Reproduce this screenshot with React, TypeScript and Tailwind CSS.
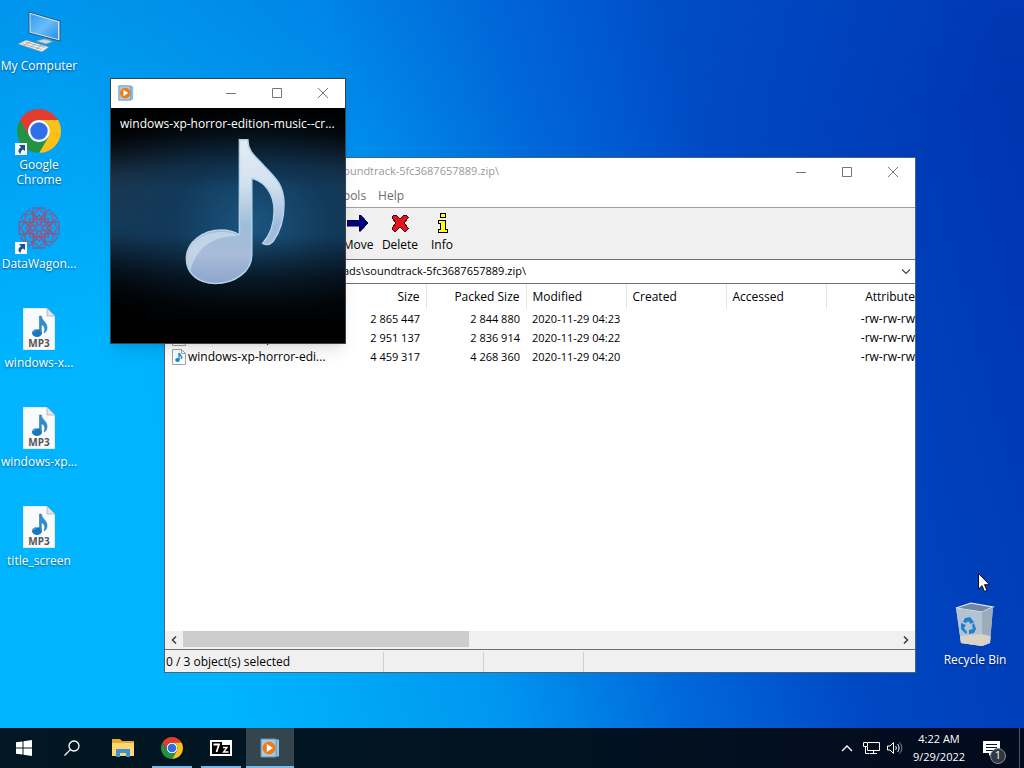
import type { ReactNode } from "react";

const files = [
  { name: "soundtrack-menu.mp3", size: "2 865 447", packed: "2 844 880", modified: "2020-11-29 04:23", attributes: "-rw-rw-rw" },
  { name: "title_screen.mp3", size: "2 951 137", packed: "2 836 914", modified: "2020-11-29 04:22", attributes: "-rw-rw-rw" },
  { name: "windows-xp-horror-edi...", size: "4 459 317", packed: "4 268 360", modified: "2020-11-29 04:20", attributes: "-rw-rw-rw" },
];

const archivePath = "C:\\Users\\admin\\Downloads\\soundtrack-5fc3687657889.zip\\";

function ChromeIcon({ className }: { className: string }) {
  return (
    <svg viewBox="0 0 48 48" className={className}>
      <circle cx="24" cy="24" r="12" fill="#fff" />
      <path fill="#e33b2e" d="M24 12H44.78a24 24 0 0 0-41.56 0L13.6 30A12 12 0 0 1 24 12Z" />
      <path fill="#fbc116" d="M34.39 30 24 48A24 24 0 0 0 44.78 12H24A12 12 0 0 1 34.39 30Z" />
      <path fill="#229342" d="M13.6 30 3.22 12A24 24 0 0 0 24 48L34.39 30A12 12 0 0 1 13.6 30Z" />
      <circle cx="24" cy="24" r="9.5" fill="#2f6fe8" />
    </svg>
  );
}

function ComputerIcon() {
  return (
    <svg viewBox="0 0 48 48" className="size-12">
      <defs>
        <linearGradient id="screen" x1="0" y1="0" x2="1" y2="1">
          <stop offset="0" stopColor="#2f9cf0" />
          <stop offset="0.5" stopColor="#6abcf8" />
          <stop offset="1" stopColor="#2492e6" />
        </linearGradient>
      </defs>
      <path d="M29 30l6 2v3l-5-1z" fill="#9aa6b0" />
      <path d="M21 33l8-2 9 2.500-7 2.500z" fill="#cfd6dc" stroke="#7d8992" strokeWidth=".5" />
      <path d="M14 4l31 9v20l-31-8z" fill="#d9e3ea" stroke="#25577e" strokeWidth="1" />
      <path d="M15.500 6l27.500 8v17l-27.500-7z" fill="url(#screen)" />
      <path d="M3 36l8-4 23 7-7 5z" fill="#eef1f3" stroke="#7d8992" strokeWidth=".7" />
      <path d="M7 35.500l20 6M10 34l20 5.500M9 37.500l6-3.500M15 39.500l6-4M21 41l6-4" stroke="#98a4ad" strokeWidth=".8" />
    </svg>
  );
}

// Eight knots turned around one centre
function DataWagonIcon() {
  return (
    <svg viewBox="0 0 48 48" className="size-12" fill="none" stroke="#6a66a4" strokeWidth="1.3">
      {[0, 45, 90, 135, 180, 225, 270, 315].map((angle) => (
        <g key={angle} transform={`rotate(${angle} 24 22)`}>
          <path d="M18 2h12v6l-6 6-6-6z" />
          <path d="M18 8l6-5 6 5M19 14l5-5 5 5-5 5z" stroke="#a5527f" />
          <path d="M24 14l7-7M24 14l-7-7" stroke="#8d5587" />
        </g>
      ))}
    </svg>
  );
}

function ShortcutArrow() {
  return (
    <svg viewBox="0 0 12 12" className="absolute bottom-0 left-0 size-3">
      <path d="M0 0h12v12H0z" fill="#f4f8fb" />
      <path d="M4 2h6v6L8 6.500C6.200 7.500 5.500 9 5.600 11 2.500 9 3 6 6 4.200z" fill="#1d4f91" />
    </svg>
  );
}

function Mp3Icon() {
  return (
    <svg viewBox="0 0 32 42" className="h-[42px] w-8">
      <path d="M0 0h24l8 8v34H0z" fill="#f8fafb" stroke="#a4b4bf" strokeWidth=".5" />
      <path d="M24 0v8h8z" fill="#dfe6ea" stroke="#8fa0ab" strokeWidth=".6" />
      <ellipse cx="14" cy="25" rx="5" ry="4" fill="#1978bd" />
      <path d="M16.500 25V8h1.800c.5 5 6 6 5.700 12-.1 2.500-1.400 4.500-3 5 2-5-.2-7.500-2.700-8.500v9z" fill="#2e8fd0" stroke="#17649f" strokeWidth=".5" />
      <path d="M10.500 24c1-2.500 3.500-3 5-2.500" stroke="#78c4ee" fill="none" />
      <text x="16" y="39" textAnchor="middle" fontSize="10" fontWeight="700" fontFamily="Open Sans, sans-serif" fill="#555">MP3</text>
    </svg>
  );
}

function SmallMusicIcon() {
  return (
    <svg viewBox="0 0 14 16" className="h-4 w-3.5 shrink-0">
      <path d="M.5.500h9l4 4v11H.5z" fill="#fff" stroke="#9aa5ad" />
      <path d="M9.500.500v4h4" fill="none" stroke="#9aa5ad" />
      <ellipse cx="5.500" cy="11" rx="2.300" ry="1.900" fill="#1c86cf" />
      <path d="M7 11V4c.5 2 3.500 2.500 2.500 6" fill="none" stroke="#1c86cf" strokeWidth="1.300" />
    </svg>
  );
}

function RecycleBinIcon() {
  return (
    <svg viewBox="0 0 48 48" className="size-12">
      <path d="M5 6l15-5 22 4-3 36-8 3-21-3z" fill="#b9c7d6" />
      <path d="M5 6l15-5 22 4-11 5z" fill="#6f87a6" stroke="#e8eff5" strokeWidth="1.200" />
      <path d="M5 6l26 4v34l-21-3z" fill="#b4c3d4" />
      <path d="M31 10l11-5-3 36-8 3z" fill="#9dacbd" />
      <path d="M9 34l21-2 9.500 2-.5 7-8 3-21-3z" fill="#d8d3c4" />
      <g fill="#1a80cf">
        <path d="M14 16l5-1 4 5-3 2-3-3-2 2-3-1z" />
        <path d="M10 21l5 2-2 3 3 4-1 2-5-5z" />
        <path d="M23 21l2 6-2 4-5 1v-4l4-1-1-4z" />
      </g>
    </svg>
  );
}

function PlayerIcon({ className }: { className: string }) {
  return (
    <svg viewBox="0 0 20 20" className={className}>
      <path d="M5 1.500h14v17H5z" fill="#8fbfe0" />
      <path d="M1 1h15v18H1z" fill="#a9cbe2" stroke="#5e93b8" />
      <circle cx="9" cy="10" r="6.500" fill="#ee7c1b" />
      <path d="M6.800 6v8l6-4z" fill="#fff" />
    </svg>
  );
}

function DesktopIcon({ label, shortcut, children }: { label: string; shortcut?: boolean; children: ReactNode }) {
  return (
    <button type="button" className="flex h-[99px] w-[78px] flex-col items-center text-white">
      <span className="relative flex size-12 items-center justify-center">
        {children}
        {shortcut && <ShortcutArrow />}
      </span>
      <span className="mt-0.5 leading-[15px] [text-shadow:0_1px_2px_rgba(0,0,0,0.5)]">{label}</span>
    </button>
  );
}

function WindowControls() {
  return (
    <div className="-mr-px flex h-full text-[#777]">
      <button type="button" aria-label="Minimize" className="flex w-[46px] items-center justify-center">
        <svg viewBox="0 0 10 10" className="size-2.5" stroke="currentColor"><path d="M0 5.500h10" /></svg>
      </button>
      <button type="button" aria-label="Maximize" className="flex w-[46px] items-center justify-center">
        <svg viewBox="0 0 10 10" className="size-2.5" stroke="currentColor" fill="none"><path d="M.5.500h9v9h-9z" /></svg>
      </button>
      <button type="button" aria-label="Close" className="flex w-[46px] items-center justify-center">
        <svg viewBox="0 0 10 10" className="size-2.5" stroke="currentColor"><path d="M0 0l10 10M10 0L0 10" /></svg>
      </button>
    </div>
  );
}

function ToolbarButton({ label, children }: { label: string; children: ReactNode }) {
  return (
    <button type="button" className="flex w-[42px] flex-col items-center">
      <svg viewBox="0 0 24 24" className="size-6" shapeRendering="crispEdges">{children}</svg>
      <span className="mt-0.5 leading-4">{label}</span>
    </button>
  );
}

function ArchiveWindow() {
  return (
    <section className="absolute top-[157px] right-[108px] bottom-[55px] left-[164px] flex flex-col border border-[#46627c] bg-white text-black">
      {/* Title bar */}
      <header className="flex h-[27px] items-center justify-between">
        <div className="flex items-center gap-1.5 pl-1.5 text-[11px] text-[#999]">
          <span className="flex h-4 w-4 items-center justify-center bg-black text-[10px] text-white">7z</span>
          <h2>{archivePath}</h2>
        </div>
        <WindowControls />
      </header>

      {/* Menu */}
      <nav className="flex h-[22px] items-center gap-3 pl-1.5 text-[#6d6d6d]">
        {["File", "Edit", "View", "Favorites", "Tools", "Help"].map((item) => (
          <button key={item} type="button">{item}</button>
        ))}
      </nav>

      {/* Toolbar */}
      <div className="flex h-[52px] items-start border-t border-[#a0a0a0] bg-[#f0f0f0] pt-[3px] pl-1">
        <ToolbarButton label="Add"><path d="M10 4h4v6h6v4h-6v6h-4v-6H4v-4h6z" fill="#0a0" /></ToolbarButton>
        <ToolbarButton label="Extract"><path d="M2 10h20v4H2z" fill="#00f" /></ToolbarButton>
        <ToolbarButton label="Test"><path d="M3 8l9 8 9-8v4l-9 8-9-8z" fill="#0a0" /></ToolbarButton>
        <ToolbarButton label="Copy"><path d="M2 9h12V4l8 8-8 8v-5H2z" fill="#0a0" /></ToolbarButton>
        <ToolbarButton label="Move"><path d="M1 9h12V4h2l7 8-7 8h-2v-5H1z" fill="#00007c" stroke="#000" strokeWidth=".5" /></ToolbarButton>
        <ToolbarButton label="Delete">
          <path d="M4 6l2-2h2l4 4 4-4h2l2 2v1l-4 5 4 5v1l-2 2h-2l-4-4-4 4H6l-2-2v-1l4-5-4-5z" fill="#e3141c" stroke="#4a0000" />
        </ToolbarButton>
        <ToolbarButton label="Info">
          <path d="M10 2.500h5v4h-5zM8 9.500h7v9h2v3H8v-3h2v-6H8z" fill="#ffff1c" stroke="#000" />
        </ToolbarButton>
      </div>

      {/* Address */}
      <div className="relative flex h-[25px] items-center border-t border-b border-[#6f6f6f] bg-white">
        <select aria-label="Address" className="h-full w-full appearance-none bg-white pl-[55px] text-[11px] outline-none">
          <option>{archivePath}</option>
        </select>
        <svg viewBox="0 0 10 6" className="pointer-events-none absolute right-1 h-1.5 w-2.5" fill="none" stroke="#444" strokeWidth="1.200">
          <path d="M1 .5l4 4 4-4" />
        </svg>
      </div>

      {/* File list */}
      <div className="min-h-0 flex-1 pl-px">
        <table className="w-full table-fixed text-left">
          <thead>
            <tr className="h-[25px] [&>th]:border-r [&>th]:border-[#e5e5e5] [&>th]:px-1.5 [&>th]:font-normal">
              <th className="w-[160px]">Name</th>
              <th className="w-[100px] text-right">Size</th>
              <th className="w-[100px] text-right">Packed Size</th>
              <th className="w-[100px]">Modified</th>
              <th className="w-[100px]">Created</th>
              <th className="w-[100px]">Accessed</th>
              <th className="border-r-0! pr-0! text-right">Attribute</th>
            </tr>
          </thead>
          <tbody>
            {files.map((file) => (
              <tr key={file.name} className="h-[19px] whitespace-nowrap [&>td]:px-1.5 [&>td]:leading-[19px]">
                <td>
                  <span className="flex items-center gap-0.5"><SmallMusicIcon />{file.name}</span>
                </td>
                <td className="text-right text-[11px]">{file.size}</td>
                <td className="text-right text-[11px]">{file.packed}</td>
                <td className="text-[11px]">{file.modified}</td>
                <td />
                <td />
                <td className="pr-0! text-right">{file.attributes}</td>
              </tr>
            ))}
          </tbody>
        </table>
      </div>

      {/* Horizontal scroll bar */}
      <div className="flex h-[18px] shrink-0 bg-[#f0f0f0]">
        <button type="button" aria-label="Scroll left" className="flex w-[18px] items-center justify-center">
          <svg viewBox="0 0 6 8" className="h-2 w-1.5" fill="none" stroke="#444" strokeWidth="1.600"><path d="M5 .5L1.500 4 5 7.500" /></svg>
        </button>
        <div className="flex-1"><div className="h-4 w-2/5 bg-[#cdcdcd]" /></div>
        <button type="button" aria-label="Scroll right" className="flex w-[18px] items-center justify-center">
          <svg viewBox="0 0 6 8" className="h-2 w-1.5" fill="none" stroke="#444" strokeWidth="1.600"><path d="M1 .5L4.500 4 1 7.500" /></svg>
        </button>
      </div>

      {/* Status bar */}
      <footer className="flex h-[23px] shrink-0 items-stretch border-t border-[#6f6f6f] bg-[#f0f0f0] pt-0.5 [&>span]:border-r [&>span]:border-[#d0d0d0]">
        <span className="w-[219px] pl-px leading-5">0 / 3 object(s) selected</span>
        <span className="w-[100px]" />
        <span className="w-[100px]" />
      </footer>
    </section>
  );
}

function PlayerWindow() {
  return (
    <section className="absolute top-[78px] left-[110px] flex h-[266px] w-[236px] flex-col border border-[#3c4248] bg-black shadow-lg">
      <header className="flex h-[29px] items-center justify-between bg-white pb-0.5">
        <PlayerIcon className="ml-[7px] size-4" />
        <WindowControls />
      </header>
      <div className="relative flex-1 bg-[radial-gradient(ellipse_at_60%_50%,#1b5580_0%,#12395a_40%,transparent_85%),linear-gradient(to_bottom,#000_0%,#04080d_10%,#1d3449_28%,#153a58_50%,#0a1a2e_70%,#010204_84%,#000_100%)]">
        <div className="absolute inset-0 bg-[linear-gradient(to_bottom,#000_0%,#000a_10%,#0003_24%,transparent_34%,transparent_54%,#0009_72%,#000_92%)]" />
        <svg viewBox="0 0 236 235" className="absolute inset-0 h-full w-full">
          <defs>
            <linearGradient id="note" x1="0" y1="0" x2="0" y2="1">
              <stop offset="0" stopColor="#e4ecf2" />
              <stop offset=".3" stopColor="#d3e2ef" />
              <stop offset=".6" stopColor="#9dbcd9" />
              <stop offset=".8" stopColor="#a9bcd9" />
              <stop offset="1" stopColor="#8ba5cb" />
            </linearGradient>
          </defs>
          <path
            d="M129.500 31h8.500c0 12 8 17 16 26 12 12 20.500 20 20.500 39 0 16-5 29-11 37.500-3 3-7 4-10.500 2 8-9 11.500-21 11.500-33 0-17-9-29-22.500-32.500v77c0 17-17 29-37 29-17 0-29-10-29-25 0-17 17-29 35-29 8 0 13 1.500 18.500 5z"
            fill="url(#note)"
            stroke="#b4d2ea"
            strokeWidth="1.500"
          />
          <path d="M77 152c-1-16 15-28 34-28 8 0 12 1 17 4-26 0-42 12-48 35-2-3-3-7-3-11z" fill="#e1eaf3" opacity=".5" />
        </svg>
        <p className="relative px-[9px] pt-2 leading-4 whitespace-nowrap text-white">windows-xp-horror-edition-music--cr...</p>
      </div>
    </section>
  );
}

function Taskbar() {
  return (
    <footer className="flex h-10 shrink-0 items-stretch bg-[linear-gradient(to_right,#021722,#021422_45%,#020a1e)] text-white">
      <button type="button" aria-label="Start" className="flex w-12 items-center justify-center">
        <svg viewBox="0 0 16 16" className="size-4" fill="#fff"><path d="M0 2.300l6.500-.9v6.100H0zM7.500 1.200L16 0v7.500H7.500zM0 8.500h6.500v6.100L0 13.700zM7.500 8.500H16V16l-8.500-1.200z" /></svg>
      </button>
      <button type="button" aria-label="Search" className="flex w-12 items-center justify-center">
        <svg viewBox="0 0 16 16" className="size-4" fill="none" stroke="#fff" strokeWidth="1.300"><circle cx="10" cy="6" r="5" /><path d="M6.400 9.600L.5 15.500" /></svg>
      </button>
      <button type="button" aria-label="File Explorer" className="ml-[3px] flex w-12 items-center justify-center">
        <svg viewBox="0 0 22 20" className="h-5 w-[22px]">
          <path d="M0 1h8l2 2h12v14H0z" fill="#e3ab28" />
          <path d="M0 5h22v13H0z" fill="#fcd873" />
          <path d="M4 11h14v8h-4v-4H8v4H4z" fill="#3f92cf" />
        </svg>
      </button>
      <button type="button" aria-label="Google Chrome" className="ml-px flex w-12 flex-col items-center">
        <span className="flex h-[38px] items-center"><ChromeIcon className="mt-0.5 size-[22px]" /></span>
        <span className="h-0.5 w-10 bg-[#76b9ed]" />
      </button>
      <button type="button" aria-label="7-Zip" className="ml-px flex w-12 flex-col items-center">
        <span className="flex h-[38px] items-center">
          <svg viewBox="0 0 22 16" className="mt-0.5 h-4 w-[22px]">
            <path d="M0 0h22v16H0z" fill="#fff" />
            <path d="M2 2h10v12H2zM12 5h8v9h-8z" fill="#000" />
            <path d="M3.500 4.500H9L6.500 12" fill="none" stroke="#fff" strokeWidth="1.800" />
            <path d="M13 7.500h4l-3.500 4.500h5" fill="none" stroke="#fff" strokeWidth="1.300" />
          </svg>
        </span>
        <span className="h-0.5 w-10 bg-[#76b9ed]" />
      </button>
      <button type="button" aria-label="Media Player" className="ml-px flex w-12 flex-col items-center bg-[#34454e]">
        <span className="flex h-[38px] items-center"><PlayerIcon className="mt-0.5 size-5" /></span>
        <span className="h-0.5 w-full bg-[#76b9ed]" />
      </button>

      {/* Tray */}
      <div className="ml-auto flex items-center">
        <button type="button" aria-label="Show hidden icons" className="flex w-6 justify-center">
          <svg viewBox="0 0 12 8" className="h-2 w-3" fill="none" stroke="#fff" strokeWidth="1.400"><path d="M1 7l5-5 5 5" /></svg>
        </button>
        <button type="button" aria-label="Network" className="flex w-6 justify-center">
          <svg viewBox="0 0 17 16" className="h-4 w-[17px]" fill="none" stroke="#fff"><path d="M5 2.500h11.500v8H4.500V7M.5 2.500h4v4h-4zM2.500 6.500v7h4M10.500 10.500v3M7 13.500h7" /></svg>
        </button>
        <button type="button" aria-label="Volume" className="flex w-6 justify-center">
          <svg viewBox="0 0 16 14" className="h-3.5 w-4" fill="none" stroke="#fff"><path d="M.5 5h2.500l3.500-3.500v11L3 9H.5zM8.500 5c1 1 1 3 0 4M10.500 3c2 2 2 6 0 8" /><path d="M12.500 1.500c3 3 3 8 0 11" opacity=".5" /></svg>
        </button>
        <time dateTime="2022-09-29T04:22" className="w-16 text-center text-[11px] leading-[18px]">4:22 AM<br />9/29/2022</time>
        <button type="button" aria-label="Notifications" className="ml-1 flex h-10 w-11 items-center pl-2">
          <span className="relative">
            <svg viewBox="0 0 17 17" className="size-[17px]"><path d="M0 1h17v12H9l-3 3v-3H0z" fill="#fff" /><path d="M3 4.500h11M3 7.500h11M3 10.500h7" stroke="#07142a" /></svg>
            <span className="absolute top-2 left-[7px] flex size-4 items-center justify-center rounded-full border border-[#8a9199] bg-[#31383f] text-[11px]">1</span>
          </span>
        </button>
        <button type="button" aria-label="Show desktop" className="h-10 w-[5px] border-l border-[#4c5768]" />
      </div>
    </footer>
  );
}

export default function App() {
  return (
    <div className="flex h-screen flex-col overflow-hidden bg-[linear-gradient(165deg,#0060d060_0%,transparent_35%),linear-gradient(75deg,#00b4ff_0%,#00b4ff_20%,#00acf9_27%,#0096f0_42%,#0068da_57%,#0056ce_65%,#0049c4_71%,#0040bc_82%,#0035b0_97%)] font-['Open_Sans','Noto_Sans',sans-serif] text-xs">
      <main className="relative flex min-h-0 flex-1 justify-between">
        <div className="flex flex-col pt-2">
          <DesktopIcon label="My Computer"><ComputerIcon /></DesktopIcon>
          <DesktopIcon label="Google Chrome" shortcut><ChromeIcon className="size-11" /></DesktopIcon>
          <DesktopIcon label="DataWagon..." shortcut><DataWagonIcon /></DesktopIcon>
          <DesktopIcon label="windows-x..."><Mp3Icon /></DesktopIcon>
          <DesktopIcon label="windows-xp..."><Mp3Icon /></DesktopIcon>
          <DesktopIcon label="title_screen"><Mp3Icon /></DesktopIcon>
        </div>

        <div className="flex flex-col justify-end pr-2.5 pb-[27px]">
          <DesktopIcon label="Recycle Bin"><RecycleBinIcon /></DesktopIcon>
        </div>

        <ArchiveWindow />
        <PlayerWindow />

        {/* Mouse pointer */}
        <svg viewBox="0 0 12 19" className="absolute top-[573px] left-[978px] h-[19px] w-3">
          <path d="M.5.500v15.500l3.500-3.300 2.500 5.800 2.500-1-2.500-5.800h5z" fill="#fff" stroke="#111" />
        </svg>
      </main>
      <Taskbar />
    </div>
  );
}
